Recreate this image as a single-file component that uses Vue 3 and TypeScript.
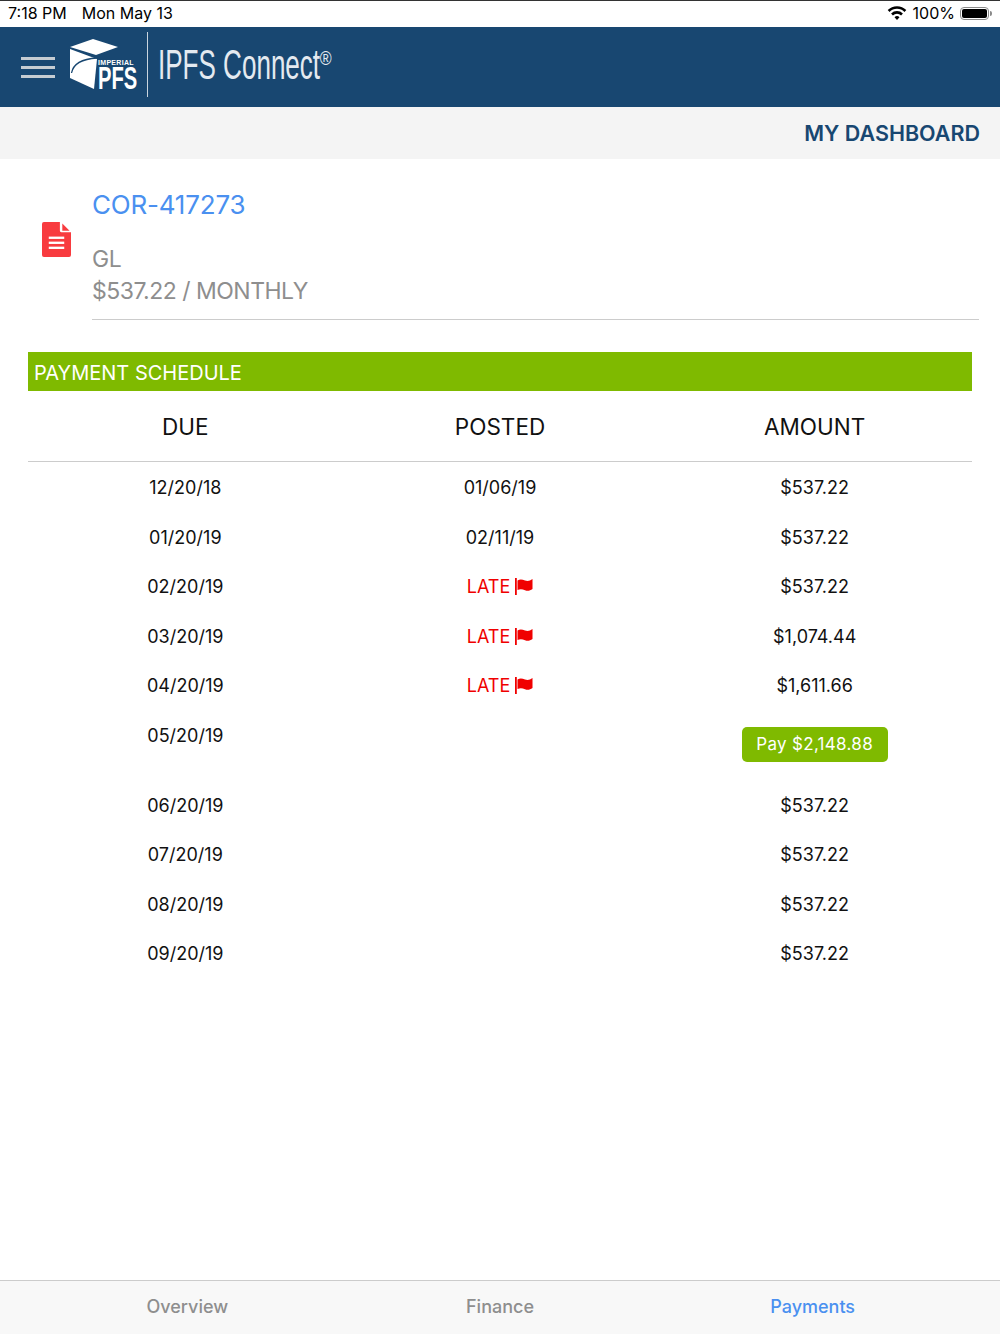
<template>
  <div class="page">
    <div class="status-bar">
      <span class="time">7:18 PM</span>
      <span class="date">Mon May 13</span>
      <span class="status-right">
        <svg width="20" height="15" viewBox="0 0 20 15"><path d="M10 14l-2.500-2.700a3.500 3.500 0 0 1 5 0zM5.900 9.400L4.100 7.500a8.400 8.400 0 0 1 11.800 0l-1.800 1.900a5.800 5.800 0 0 0-8.200 0zM2.500 5.900L.7 4a13.200 13.200 0 0 1 18.600 0l-1.800 1.900a10.600 10.600 0 0 0-15 0z" fill="#000"/></svg>
        <span class="pct">100%</span>
        <span class="battery"><span class="battery-fill"></span></span>
        <span class="battery-tip"></span>
      </span>
    </div>
    <header class="top-bar">
      <div class="burger"><span></span><span></span><span></span></div>
      <div class="logo">
        <svg width="50" height="54" viewBox="0 0 50 54">
          <path d="M0 8L23 0l25 8-22 8z" fill="#fff"/>
          <path d="M0 10l27 10-3 30L0 39z" fill="#fff"/>
          <path d="M1.500 34C3 26 10 20 27 19" fill="none" stroke="#184771" stroke-width="1.300"/>
        </svg>
        <div class="logo-text">
          <span class="imperial">IMPERIAL</span>
          <span class="pfs">PFS</span>
        </div>
      </div>
      <div class="divider"></div>
      <span class="brand">IPFS Connect<sup>®</sup></span>
    </header>
    <div class="sub-bar">MY DASHBOARD</div>
    <section class="policy">
      <svg class="doc-icon" width="29" height="35" viewBox="0 0 30 36">
        <path d="M2 0h16.500v9a1.500 1.500 0 0 0 1.500 1.500h10V34a2 2 0 0 1-2 2H2a2 2 0 0 1-2-2V2a2 2 0 0 1 2-2z" fill="#f83b3f"/>
        <path d="M21 1.500l7.500 7.500H21z" fill="#f83b3f"/>
        <rect x="7" y="15" width="16" height="2.400" fill="#fff"/>
        <rect x="7" y="20.200" width="16" height="2.400" fill="#fff"/>
        <rect x="7" y="25.400" width="16" height="2.400" fill="#fff"/>
      </svg>
      <div class="policy-info">
        <div class="policy-no">COR-417273</div>
        <div class="policy-line first">GL</div>
        <div class="policy-line">$537.22 / MONTHLY</div>
      </div>
    </section>
    <section class="schedule">
      <div class="schedule-title">PAYMENT SCHEDULE</div>
      <div class="row head">
        <div>DUE</div>
        <div>POSTED</div>
        <div>AMOUNT</div>
      </div>
      <div v-for="p in payments" :key="p.due" class="row" :class="{ tall: p.pay }">
        <div>{{ p.due }}</div>
        <div>
          <span v-if="p.late" class="late">
            LATE
            <svg width="18" height="17" viewBox="0 0 18 17"><path d="M0 0h1.800v17H0zM2.500 2.500c3-1.800 5-.8 7.500 0 2.500.8 5 .5 7.500-1.500v10c-2.500 1.800-5 2.200-7.500 1.200-2.500-1-4.500-1.700-7.500-.2z" fill="#f00000"/></svg>
          </span>
          <span v-else>{{ p.posted }}</span>
        </div>
        <div>
          <button v-if="p.pay" class="pay-btn">{{ p.pay }}</button>
          <span v-else>{{ p.amount }}</span>
        </div>
      </div>
    </section>
    <nav class="tabs">
      <div v-for="t in tabs" :key="t" class="tab" :class="{ active: t === 'Payments' }">{{ t }}</div>
    </nav>
  </div>
</template>

<script setup lang="ts">
interface Payment {
  due: string
  posted?: string
  amount?: string
  late?: boolean
  pay?: string
}

const payments: Payment[] = [
  { due: '12/20/18', posted: '01/06/19', amount: '$537.22' },
  { due: '01/20/19', posted: '02/11/19', amount: '$537.22' },
  { due: '02/20/19', late: true, amount: '$537.22' },
  { due: '03/20/19', late: true, amount: '$1,074.44' },
  { due: '04/20/19', late: true, amount: '$1,611.66' },
  { due: '05/20/19', pay: 'Pay $2,148.88' },
  { due: '06/20/19', amount: '$537.22' },
  { due: '07/20/19', amount: '$537.22' },
  { due: '08/20/19', amount: '$537.22' },
  { due: '09/20/19', amount: '$537.22' }
]

const tabs = ['Overview', 'Finance', 'Payments']
</script>

<style>
body {
  background: #fff;
}
</style>

<style scoped>
.page {
  width: 1000px;
  height: 1334px;
  display: flex;
  flex-direction: column;
  font-family: Inter, "Liberation Sans", sans-serif;
  color: #111;
  overflow: hidden;
}

.status-bar {
  height: 27px;
  box-sizing: border-box;
  border-top: 1px solid #333;
  display: flex;
  align-items: center;
  padding: 0 8px 2px;
  font-size: 16px;
  color: #000;
}

.date {
  margin-left: 15px;
}

.status-right {
  margin-left: auto;
  display: flex;
  align-items: center;
}

.pct {
  margin: 0 5px 0 6px;
}

.battery {
  width: 29px;
  height: 13px;
  border: 1px solid #8a8a8a;
  border-radius: 4px;
  padding: 1px;
  box-sizing: border-box;
  display: flex;
}

.battery-fill {
  flex: 1;
  background: #000;
  border-radius: 2px;
}

.battery-tip {
  width: 2px;
  height: 5px;
  margin-left: 1px;
  background: #8a8a8a;
  border-radius: 0 2px 2px 0;
}

.top-bar {
  height: 80px;
  background: #184771;
  display: flex;
  align-items: center;
  padding-left: 21px;
  color: #fff;
}

.burger {
  width: 34px;
  display: flex;
  flex-direction: column;
  gap: 6px;
}

.burger span {
  height: 3px;
  background: #c5ccd2;
}

.logo {
  position: relative;
  width: 66px;
  height: 54px;
  margin: -2px 0 0 15px;
}

.logo svg {
  display: block;
}

.logo-text {
  position: absolute;
  left: 28px;
  top: 20px;
  width: 38px;
  display: flex;
  flex-direction: column;
  line-height: 1;
}

.imperial {
  font: 700 7px/8px "Liberation Sans", sans-serif;
  letter-spacing: 0.3px;
  white-space: nowrap;
}

.pfs {
  font: 700 31px/24px "Liberation Sans", sans-serif;
  transform: scaleX(0.65);
  transform-origin: left;
  white-space: nowrap;
}

.divider {
  width: 1px;
  height: 65px;
  background: #c9d5df;
  margin: -6px 0 0 11px;
}

.brand {
  margin: -5px 0 0 10px;
  font: 400 42px "Liberation Sans", sans-serif;
  transform: scaleX(0.62);
  transform-origin: left;
  white-space: nowrap;
  color: #e4eaf0;
}

.brand sup {
  display: inline-block;
  font-size: 20px;
  vertical-align: 14px;
  line-height: 0;
  transform: scaleX(1.3);
  transform-origin: left;
}

.sub-bar {
  height: 52px;
  background: #f4f4f4;
  line-height: 52px;
  text-align: right;
  padding-right: 20px;
  font-size: 21.500px;
  font-weight: 600;
  color: #184771;
}

.policy {
  margin-top: 28px;
  height: 133px;
  display: flex;
  padding-left: 42px;
  box-sizing: border-box;
}

.doc-icon {
  margin-top: 35px;
}

.policy-info {
  margin-left: 21px;
  width: 887px;
  height: 133px;
  box-sizing: border-box;
  border-bottom: 1px solid #ccc;
}

.policy-no {
  font-size: 26px;
  letter-spacing: -0.2px;
  line-height: 36px;
  color: #4a90f0;
}

.policy-line {
  font-size: 23px;
  letter-spacing: -0.5px;
  line-height: 32px;
  color: #8e8e8e;
}

.policy-line.first {
  margin-top: 20px;
}

.schedule {
  margin: 32px 28px 0;
  flex: 1;
}

.schedule-title {
  height: 39px;
  line-height: 43px;
  background: #7fba00;
  color: #fff;
  font-size: 20px;
  padding-left: 6px;
}

.row {
  display: grid;
  grid-template-columns: repeat(3, 1fr);
  text-align: center;
  font-size: 18px;
  height: 49.500px;
  line-height: 51px;
}

.row.head {
  height: 71px;
  line-height: 72px;
  font-size: 22.500px;
  border-bottom: 1px solid #ccc;
  box-sizing: border-box;
}

.row.tall {
  height: 70px;
}

.late {
  color: #f00000;
  display: inline-flex;
  align-items: center;
  gap: 5px;
}

.pay-btn {
  display: inline-block;
  vertical-align: top;
  margin-top: 17.500px;
  width: 146px;
  height: 35px;
  padding: 0;
  border: none;
  border-radius: 5px;
  background: #7fba00;
  color: #fff;
  font: inherit;
  line-height: 35px;
  font-size: 17px;
  letter-spacing: 0.3px;
}

.tabs {
  height: 54px;
  border-top: 1px solid #ccc;
  background: #f8f8f8;
  display: grid;
  grid-template-columns: repeat(3, 1fr);
  padding: 0 31px;
  box-sizing: border-box;
}

.tab {
  text-align: center;
  line-height: 52px;
  font-size: 18px;
  font-weight: 500;
  color: #8e8e8e;
}

.tab.active {
  color: #4a90f0;
}
</style>
